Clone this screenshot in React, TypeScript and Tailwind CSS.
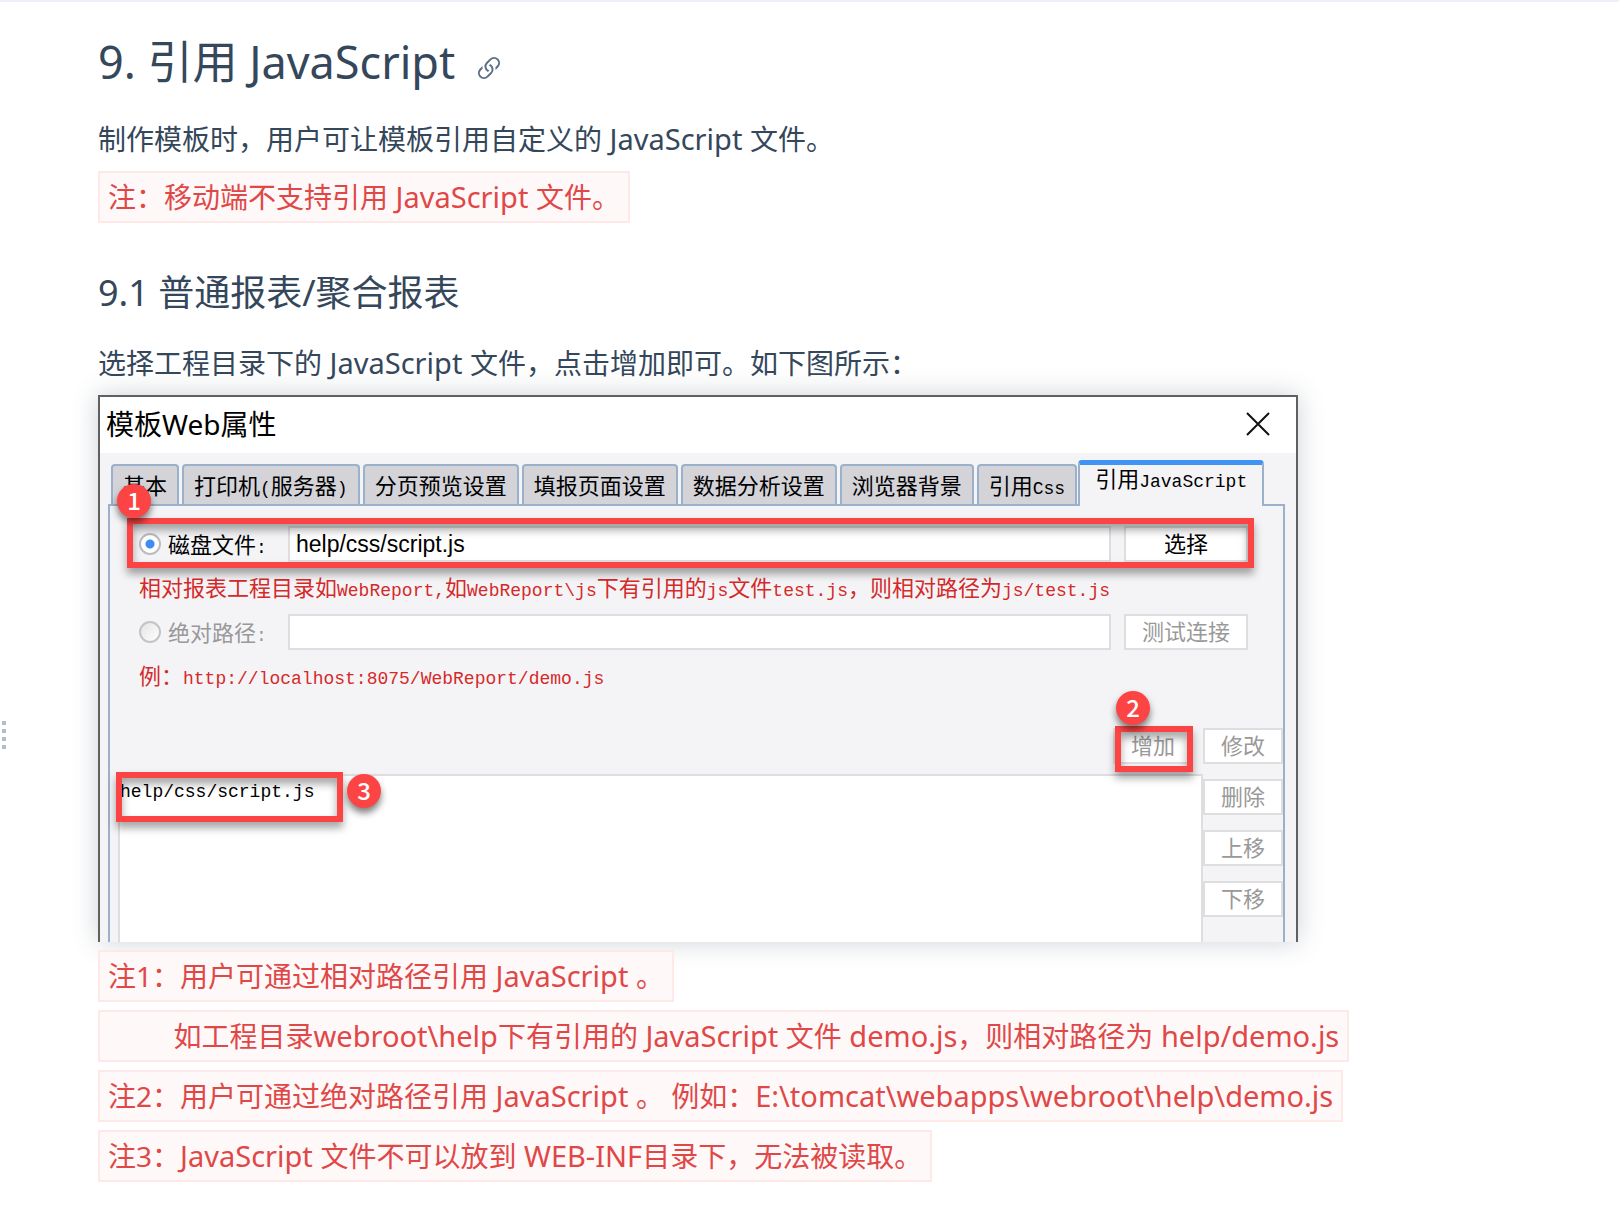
import { ReactNode, useState } from "react";
import { BsLink45Deg } from "react-icons/bs";

const TABS = [
    { id: "basic", label: "基本" },
    { id: "print", label: "打印机", latin: "(", rest: "服务器", end: ")" },
    { id: "page", label: "分页预览设置" },
    { id: "write", label: "填报页面设置" },
    { id: "analysis", label: "数据分析设置" },
    { id: "background", label: "浏览器背景" },
    { id: "css", label: "引用", latin: "Css" },
    { id: "js", label: "引用", latin: "JavaScript" },
];

const sideButtons = ["修改", "删除", "上移", "下移"];

// - Half width latin text inside the dialog
function Mono({ children }: { children: ReactNode }) {
    return <span className="font-['Liberation_Mono',monospace] text-[18px]">{children}</span>
}

// - Latin words inside the article text
function En({ children }: { children: ReactNode }) {
    return <span className="text-[29px]">{children}</span>
}

function Note({ children }: { children: ReactNode }) {
    return (
        <p className="w-fit h-[52px] px-2 border-2 border-[#ffe8e8] bg-[#fff8f8] text-[#e04848] whitespace-pre leading-[48px]">{children}</p>
    )
}

function Badge({ children, className }: { children: ReactNode, className: string }) {
    return (
        <span className={`absolute z-20 flex justify-center items-center size-[34px] pb-0.5 rounded-full bg-[#fd4444] text-white text-[24px] font-medium shadow-[0_5px_7px_rgba(0,0,0,0.5)] ${className}`}>{children}</span>
    )
}

// - Red frame drawn around the highlighted controls
function Frame({ className }: { className: string }) {
    return (
        <span className={`absolute z-10 pointer-events-none border-6 border-[#fd4444] shadow-[0_6px_8px_rgba(0,0,0,0.35),inset_0_6px_8px_rgba(0,0,0,0.35)] ${className}`} />
    )
}

function DialogButton({ children, className, disabled = true }: { children: ReactNode, className: string, disabled?: boolean }) {
    return (
        <button disabled={disabled} className={`h-9 shrink-0 pb-1 border-2 border-[#dedee0] bg-white text-[22px] leading-7 text-black disabled:text-[#999999] ${className}`}>{children}</button>
    )
}

function Dialog() {
    const [active, setActive] = useState("js");
    const [source, setSource] = useState("disk");

    return (
        <section className="flex flex-col max-w-[1200px] h-[547px] overflow-hidden border-2 border-b-0 border-[#606060] bg-[#f4f4f7] font-['Noto_Sans_CJK_SC',sans-serif] text-[22px] text-black">
            <header className="flex justify-between items-center h-14 shrink-0 pl-1.5 pr-[26px] pb-0.5 bg-white">
                <h4 className="font-['Noto_Sans','Noto_Sans_CJK_SC',sans-serif] text-[28px]">模板Web属性</h4>
                <button aria-label="关闭">
                    <svg width="24" height="24" viewBox="0 0 24 24" stroke="#111" strokeWidth="2" fill="none">
                        <path d="M1 1 L23 23 M23 1 L1 23" />
                    </svg>
                </button>
            </header>

            {/* Tabs */}
            <div className="flex items-end h-[51px] shrink-0 pl-[11px]">
                {
                    TABS.map((tab) => (
                        <button
                            key={tab.id}
                            onClick={() => setActive(tab.id)}
                            className={tab.id === active
                                ? "relative z-10 -ml-0.5 -mb-0.5 h-[46px] px-[15px] border-x-2 border-t-5 border-x-[#9bb0cb] border-t-[#3f94f3] rounded-t-sm bg-[#f4f4f7] pb-3.5 leading-6 whitespace-nowrap"
                                : "h-10 mr-[3px] px-2.5 pb-0.5 border-2 border-b-0 border-[#9bb0cb] rounded-t-sm bg-[#d3d3d8] leading-9 whitespace-nowrap"}
                        >
                            {tab.label}
                            {tab.latin && <Mono>{tab.latin}</Mono>}
                            {tab.rest}
                            {tab.end && <Mono>{tab.end}</Mono>}
                        </button>
                    ))
                }
            </div>

            <div className="relative flex flex-col grow mx-2 mr-[11px] border-2 border-b-0 border-[#9bb0cb]">
                <Badge className="left-[7px] -top-[22px] font-bold">1</Badge>

                {/* File source */}
                <div className="pl-[29px] pr-[35px] pt-5">
                    <div className="relative flex items-center">
                        <Frame className="-left-3 -right-1.5 -top-2 -bottom-1.5" />
                        <label className="flex items-center gap-[7px] w-[149px] shrink-0">
                            <input type="radio" name="source" checked={source === "disk"} onChange={() => setSource("disk")} className="appearance-none size-[22px] rounded-full border-2 border-[#bdbdbd] bg-white checked:bg-[radial-gradient(circle,#3f8cf3_0_4px,white_5px)]" />
                            <span>磁盘文件<Mono>:</Mono></span>
                        </label>
                        <input aria-label="磁盘文件" defaultValue="help/css/script.js" className="grow min-w-0 h-9 mr-[13px] px-1.5 border-2 border-[#dedee0] bg-white font-['Liberation_Sans',sans-serif] text-[23px]" />
                        <DialogButton disabled={false} className="w-[124px]">选择</DialogButton>
                    </div>
                    <p className="h-[52px] leading-[48px] text-[#d42a2a] whitespace-nowrap">
                        相对报表工程目录如<Mono>WebReport,</Mono>如<Mono>WebReport\js</Mono>下有引用的<Mono>js</Mono>文件<Mono>test.js</Mono>，则相对路径为<Mono>js/test.js</Mono>
                    </p>
                    <div className="flex items-center">
                        <label className="flex items-center gap-[7px] w-[149px] shrink-0 text-[#999999]">
                            <input type="radio" name="source" checked={source === "path"} onChange={() => setSource("path")} className="appearance-none size-[22px] rounded-full border-2 border-[#c4c4c4] bg-linear-to-br from-[#e4e4e4] to-white checked:bg-[radial-gradient(circle,#3f8cf3_0_4px,white_5px)]" />
                            <span>绝对路径<Mono>:</Mono></span>
                        </label>
                        <input aria-label="绝对路径" className="grow min-w-0 h-9 mr-[13px] px-1.5 border-2 border-[#dedee0] bg-white" />
                        <DialogButton className="w-[124px]">测试连接</DialogButton>
                    </div>
                    <p className="h-[52px] leading-[48px] text-[#d42a2a] whitespace-nowrap">
                        例：<Mono>http://localhost:8075/WebReport/demo.js</Mono>
                    </p>
                </div>

                {/* File list */}
                <div className="flex grow pl-2 pt-[26px]">
                    <div className="flex flex-col grow gap-2.5">
                        <div className="relative self-end flex mr-2.5">
                            <Badge className="left-[3px] -top-[37px]">2</Badge>
                            <Frame className="left-0.5 right-0 -top-0.5 -bottom-2" />
                            <DialogButton className="w-20">增加</DialogButton>
                        </div>
                        <ul className="relative grow border-2 border-b-0 border-[#dedee0] bg-white">
                            <Frame className="-left-1 -top-1 w-[227px] h-[50px]" />
                            <Badge className="left-[227px] -top-0.5">3</Badge>
                            <li className="leading-[22px]"><Mono>help/css/script.js</Mono></li>
                        </ul>
                    </div>
                    <div className="flex flex-col gap-[15px]">
                        {
                            sideButtons.map((name) => (
                                <DialogButton key={name} className="w-20">{name}</DialogButton>
                            ))
                        }
                    </div>
                </div>
            </div>
        </section>
    )
}

export default function App() {
    return (
        <div className="border-t-2 border-[#edf1f7] bg-white font-['Noto_Sans','Noto_Sans_CJK_SC',sans-serif] text-[28px] text-[#34475b]">
            {/* Resize handle */}
            <svg className="fixed left-0 top-[720px]" width="8" height="30" viewBox="0 0 8 30" fill="#b4bccb">
                <path d="M2 1h4v4h-4z M2 9h4v4h-4z M2 17h4v4h-4z M2 25h4v4h-4z" />
            </svg>

            <main className="pl-[98px] pr-10 pt-6 pb-10">
                <h2 className="flex items-center gap-[18px] text-[45px] leading-[72px]">
                    9. 引用 JavaScript
                    <a href="#js" aria-label="链接" className="pt-3.5">
                        <BsLink45Deg className="size-8 text-[#5d6f86]" />
                    </a>
                </h2>
                <p className="mt-3 h-[61px] leading-[58px]">制作模板时，用户可让模板引用自定义的<En> JavaScript </En>文件。</p>
                <Note>注：移动端不支持引用<En> JavaScript </En>文件。</Note>

                <h3 className="mt-10 text-[36px] leading-[60px]">9.1 普通报表/聚合报表</h3>
                <p className="mt-3 h-[60px] leading-[56px]">选择工程目录下的<En> JavaScript </En>文件，点击增加即可。如下图所示：</p>

                <div className="max-w-[1200px] shadow-[0_0_24px_rgba(60,75,90,0.25)]">
                    <Dialog />
                </div>

                <div className="relative flex flex-col gap-2 mt-2">
                    <Note>注1：用户可通过相对路径引用<En> JavaScript </En>。</Note>
                    <Note>{"         "}如工程目录<En>webroot\help</En>下有引用的<En> JavaScript </En>文件<En> demo.js</En>，则相对路径为<En> help/demo.js</En></Note>
                    <Note>注2：用户可通过绝对路径引用<En> JavaScript </En>。 例如：<En>E:\tomcat\webapps\webroot\help\demo.js</En></Note>
                    <Note>注3：<En>JavaScript </En>文件不可以放到<En> WEB-INF</En>目录下，无法被读取。</Note>
                </div>
            </main>
        </div>
    )
};
